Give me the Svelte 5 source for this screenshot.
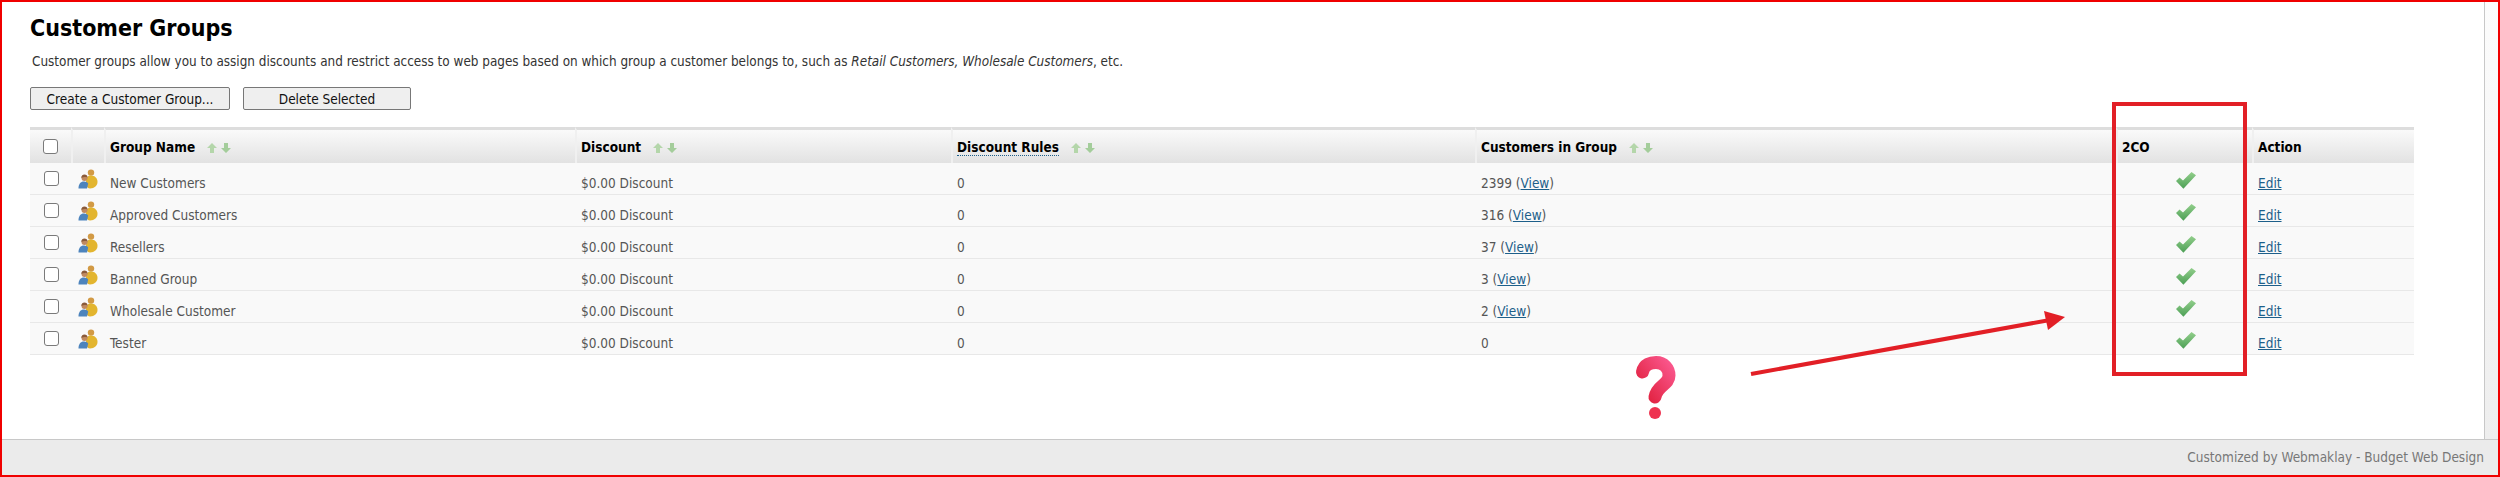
<script>
  const groups = [
    { name: 'New Customers', count: '2399', view: true },
    { name: 'Approved Customers', count: '316', view: true },
    { name: 'Resellers', count: '37', view: true },
    { name: 'Banned Group', count: '3', view: true },
    { name: 'Wholesale Customer', count: '2', view: true },
    { name: 'Tester', count: '0', view: false }
  ];
</script>

{#snippet sortArrows()}
  <svg class="sort" width="24" height="10" viewBox="0 0 24 10">
    <path d="M5 0L10 5H7V10H3V5H0Z" fill="#b4d6aa" />
    <path d="M17 0H21V5H24L19 10L14 5H17Z" fill="#a4cd9b" />
  </svg>
{/snippet}

{#snippet usersIcon()}
  <svg class="users" width="20" height="20" viewBox="0 0 20 20">
    <circle cx="13" cy="3.6" r="3.2" fill="#d29a45" />
    <path d="M8 13C8 8.5 10 6.6 13 6.6C17 6.6 19.5 9.5 19.5 13C19.5 16.5 16.5 19.5 12 19.5C9 19.5 8 16 8 13Z" fill="#e3b52f" />
    <circle cx="6.5" cy="9" r="3" fill="#c08a60" />
    <path d="M6.5 5.6C4.5 5.6 3.2 7 3.4 8.9C5 7.9 7.5 7.7 9.6 8.5C9.4 6.8 8.2 5.6 6.5 5.6Z" fill="#8a5a3a" />
    <path d="M0.5 19.5C0.5 15 2.5 12.4 6 12.4C8 12.4 9.4 13.2 10.2 14.6L9 19.5Z" fill="#4d84bd" />
  </svg>
{/snippet}

{#snippet checkIcon()}
  <svg class="check" width="20" height="17" viewBox="0 0 20 17">
    <defs>
      <linearGradient id="checkFill" x1="0" y1="0" x2="0" y2="1">
        <stop offset="0" stop-color="#93cf8c" />
        <stop offset="1" stop-color="#4c9f55" />
      </linearGradient>
    </defs>
    <path d="M0 9L3.5 5.6L7 8.4L15.5 0L20 3.2L7.4 16.8Z" fill="url(#checkFill)" />
  </svg>
{/snippet}

<div class="page">
  <div class="frame">
    <div class="main">
      <div class="content">
        <h1>Customer Groups</h1>
        <p class="intro">
          Customer groups allow you to assign discounts and restrict access to web pages based on which group a customer belongs to, such as <em>Retail Customers, Wholesale Customers</em>, etc.
        </p>
        <div class="actions">
          <button class="create" type="button">Create a Customer Group...</button>
          <button class="delete" type="button">Delete Selected</button>
        </div>
        <table>
          <colgroup>
            <col style="width: 41px" />
            <col style="width: 33px" />
            <col style="width: 471px" />
            <col style="width: 376px" />
            <col style="width: 524px" />
            <col style="width: 641px" />
            <col style="width: 136px" />
            <col style="width: 162px" />
          </colgroup>
          <thead>
            <tr>
              <th class="box"><input type="checkbox" /></th>
              <th></th>
              <th>Group Name {@render sortArrows()}</th>
              <th>Discount {@render sortArrows()}</th>
              <th><span class="dotted">Discount Rules</span> {@render sortArrows()}</th>
              <th>Customers in Group {@render sortArrows()}</th>
              <th>2CO</th>
              <th>Action</th>
            </tr>
          </thead>
          <tbody>
            {#each groups as group}
              <tr>
                <td class="box"><input type="checkbox" /></td>
                <td class="icon">{@render usersIcon()}</td>
                <td>{group.name}</td>
                <td>$0.00 Discount</td>
                <td>0</td>
                <td>{group.count}{#if group.view}{' '}(<a href="#view">View</a>){/if}</td>
                <td class="mark">{@render checkIcon()}</td>
                <td><a href="#edit">Edit</a></td>
              </tr>
            {/each}
          </tbody>
        </table>
      </div>
      <div class="gutter"></div>
    </div>
    <footer>Customized by Webmaklay - Budget Web Design</footer>
  </div>

  <!-- markup drawn over the screenshot -->
  <svg class="notes" width="2500" height="477" viewBox="0 0 2500 477">
    <defs>
      <linearGradient id="quizFill" x1="1" y1="0" x2="0" y2="1">
        <stop offset="0" stop-color="#f9558a" />
        <stop offset="1" stop-color="#e01f3c" />
      </linearGradient>
    </defs>
    <rect x="2114" y="104" width="131" height="270" fill="none" stroke="#e21f26" stroke-width="4" />
    <path d="M1751 374L2050 320" stroke="#e21f26" stroke-width="4" fill="none" />
    <path d="M2044 311L2065 317L2048 330Z" fill="#e21f26" />
    <path d="M1642.5 372C1644 364 1651 362.5 1656 362.5C1664 362.5 1669 368.5 1669 375.5C1669 385 1657 385 1655 397" stroke="url(#quizFill)" stroke-width="13" stroke-linecap="round" fill="none" />
    <circle cx="1655" cy="413" r="6" fill="#ee3350" />
  </svg>
</div>

<style>
  :global(body) {
    margin: 0;
    background: #fff;
  }

  .page {
    position: relative;
    width: 2500px;
    height: 477px;
    overflow: hidden;
    font-family: "DejaVu Sans Condensed", "DejaVu Sans", sans-serif;
    font-size: 13.5px;
    color: #555;
  }

  .frame {
    box-sizing: border-box;
    display: flex;
    flex-direction: column;
    height: 100%;
    border: 2px solid #f00000;
  }

  .main {
    flex: 1;
    display: flex;
    min-height: 0;
  }

  .content {
    flex: 1;
    padding-left: 28px;
  }

  .gutter {
    width: 13px;
    border-left: 1px solid #c8c8c8;
    background: linear-gradient(#fcfcfc, #eeeeee);
  }

  h1 {
    margin: 12px 0 0;
    font-size: 23px;
    line-height: 28px;
    font-weight: bold;
    color: #000;
  }

  .intro {
    margin: 10px 0 0 2px;
    font-size: 13.4px;
    line-height: 20px;
    color: #333;
  }

  .actions {
    display: flex;
    gap: 13px;
    margin-top: 15px;
  }

  button {
    box-sizing: border-box;
    height: 23px;
    padding: 0;
    border: 1px solid #777;
    border-radius: 2px;
    background: #efefef;
    font: inherit;
    color: #111;
  }

  .create {
    width: 200px;
  }

  .delete {
    width: 168px;
  }

  table {
    width: 2384px;
    margin-top: 17px;
    table-layout: fixed;
    border-collapse: separate;
    border-spacing: 0;
  }

  th {
    box-sizing: border-box;
    height: 36px;
    padding: 0 0 0 4px;
    border-top: 3px solid #dddddd;
    border-left: 2px solid #f0f0f0;
    background: linear-gradient(#fafafa, #e2e2e2);
    text-align: left;
    font-size: 13.5px;
    font-weight: bold;
    color: #000;
  }

  th:first-child {
    border-left: 0;
  }

  td {
    box-sizing: border-box;
    height: 32px;
    padding: 8px 0 0 6px;
    border-bottom: 1px solid #e8e8e8;
    background: #f9f9f9;
  }

  th.box,
  td.box {
    padding: 0 0 0 13px;
  }

  td.box input {
    margin-left: 1px;
  }

  td.icon {
    padding: 0 0 0 7px;
  }

  td.mark {
    padding: 3px 0 0 60px;
  }

  input {
    appearance: none;
    box-sizing: border-box;
    display: block;
    width: 15px;
    height: 15px;
    margin: 0;
    border: 1.5px solid #7a7a7a;
    border-radius: 3px;
    background: #fff;
  }

  svg {
    display: block;
  }

  .sort {
    display: inline-block;
    margin-left: 8px;
    vertical-align: -1px;
  }

  .dotted {
    border-bottom: 1px dotted #1d5f8a;
  }

  a {
    color: #1d5f8a;
  }

  footer {
    box-sizing: border-box;
    height: 36px;
    padding-right: 14px;
    border-top: 1px solid #c8c8c8;
    background: #ebebeb;
    text-align: right;
    line-height: 34px;
    font-size: 13.5px;
    color: #777;
  }

  .notes {
    position: absolute;
    top: 0;
    left: 0;
  }
</style>
